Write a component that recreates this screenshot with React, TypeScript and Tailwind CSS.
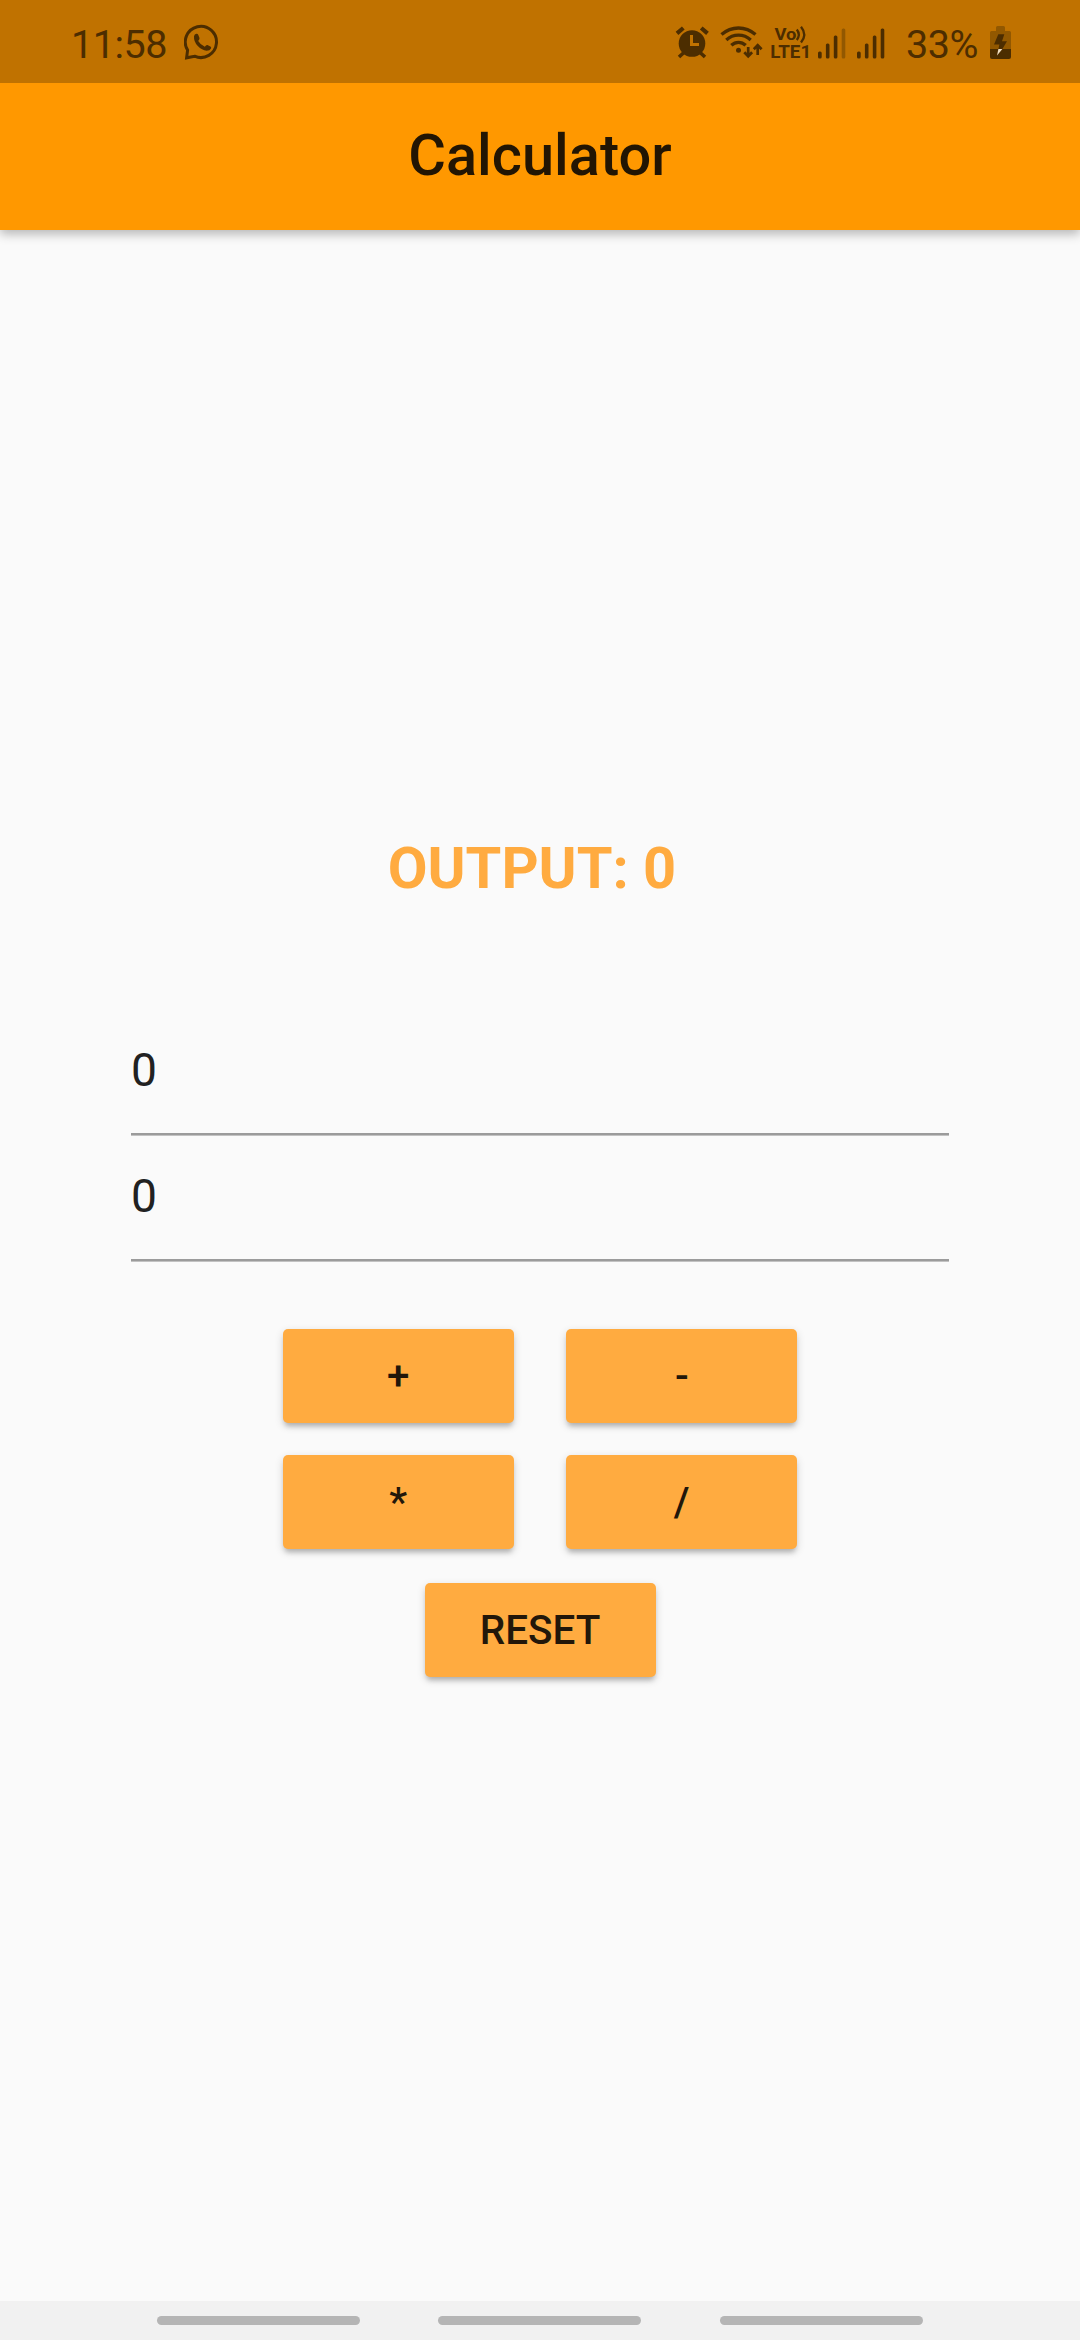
import { useState } from "react";

function WhatsAppIcon() {
  return (
    <svg className="ml-[18px] mt-[24px] h-[36px] w-[36px] shrink-0" viewBox="184 24 36 36" fill="none">
      <path d="M187.6 50.1A15.6 15.6 0 1 1 194.6 56.2L186.6 57.8Z" stroke="#4c2d00" strokeWidth="3" strokeLinejoin="miter" />
      <path d="M194 36.2q.4-2 2.4-2.4 1.3-.2 1.8 1l1.3 3.1q.4 1-1.3 3 2.4 4 6.600 5.800 1.600-2.200 2.600-1.700l3 1.400q1.200.6.6 2.200-1 2.200-4.400 2.200-4.600-.4-8.800-4.700-4.200-4.700-3.800-9.900Z" fill="#4c2d00" />
    </svg>
  );
}

function AlarmIcon() {
  return (
    <svg className="mt-[26px] h-[34px] w-[34px] shrink-0" viewBox="675 26 34 34" fill="none">
      <circle cx="692" cy="43.500" r="13.300" fill="#4c2d00" />
      <path d="M677 33.300l6.300-5.300M707.500 33.300l-6.300-5.300" stroke="#4c2d00" strokeWidth="4.200" />
      <path d="M684.500 52l-5.500 5M699.500 52l5.500 5" stroke="#4c2d00" strokeWidth="3.600" />
      <path d="M691.500 35v9.400h7.500" stroke="#c07200" strokeWidth="3" />
    </svg>
  );
}

function WifiIcon() {
  return (
    <svg className="ml-[11px] mt-[24px] h-[36px] w-[44px] shrink-0" viewBox="720 24 44 36" fill="none" stroke="#4c2d00">
      <path d="M721.500 34.600Q729 28 738.500 28T755.500 34.600" strokeWidth="3.300" />
      <path d="M726.300 40Q731.500 35.200 738.500 35.200T750.700 40" strokeWidth="3.300" />
      <path d="M731.300 45.300Q734.500 42.300 738.500 42.300T745.700 45.300" strokeWidth="3.300" />
      <circle cx="738.500" cy="50.200" r="2.500" fill="#4c2d00" stroke="none" />
      <path d="M748.200 47v9M744.300 52.300l3.900 4 3.900-4M757.700 55v-9M753.800 49.200l3.900-4 3.900 4" strokeWidth="2.700" />
    </svg>
  );
}

function VolteIcon() {
  return (
    <svg className="ml-[6px] mt-[24px] h-[38px] w-[42px] shrink-0" viewBox="770 24 42 38" fontFamily="Roboto" fontWeight="700" fill="#4c2d00">
      <text x="774.500" y="40" fontSize="17" textLength="22" lengthAdjust="spacingAndGlyphs">Vo</text>
      <path d="M796.800 29.500q4 5 0 10.500M801 26.800q6.500 8 0 15.800" fill="none" stroke="#4c2d00" strokeWidth="2.300" />
      <text x="770.200" y="58" fontSize="18.500" textLength="41" lengthAdjust="spacingAndGlyphs">LTE1</text>
    </svg>
  );
}

function SignalIcon({ full }: { full: boolean }) {
  return (
    <svg className="mt-[28px] h-[31px] w-[28px] shrink-0" viewBox="0 0 28 31" fill="#4c2d00">
      <rect x="0" y="23.500" width="3.700" height="7" rx="1.500" />
      <rect x="7.900" y="15.500" width="3.600" height="15" rx="1.500" />
      <rect x="15.800" y="7.500" width="3.600" height="23" rx="1.500" />
      <rect x="23.700" y="0.500" width="3.600" height="30" rx="1.500" fill={full ? "#4c2d00" : "#925800"} />
    </svg>
  );
}

function BatteryIcon() {
  return (
    <svg className="mt-[25px] h-[35px] w-[22px] shrink-0" viewBox="990 25 22 35" fill="#925800">
      <path d="M996 31v-3.500q0-1.500 1.500-1.500h6q1.500 0 1.500 1.500V31h4.500q1.500 0 1.500 1.500V49h-21V32.500q0-1.500 1.500-1.500Z" />
      <path d="M990 49h21v8q0 2-2 2h-17q-2 0-2-2Z" fill="#4c2d00" />
      <path d="M998.300 34.300h6l-2.300 7h5L1002.400 49h-4l1-4.500h-5.400Z" fill="#4c2d00" />
      <path d="M998.400 49h4l-5.400 6.500Z" fill="#f1dfc4" />
    </svg>
  );
}

function OperationButton({ label, onClick }: { label: string; onClick: () => void }) {
  return (
    <button
      onClick={onClick}
      className="flex h-[94.5px] w-[231px] items-center justify-center rounded-[5px] bg-[#ffab40] pt-[2px] text-[40.4px] leading-[48px] font-medium text-[#22170a] shadow-[0_5px_5px_-2px_rgba(0,0,0,0.2),0_3px_8px_rgba(0,0,0,0.16)]"
    >
      {label}
    </button>
  );
}

export default function App() {
  const [first, setFirst] = useState("0");
  const [second, setSecond] = useState("0");
  const [output, setOutput] = useState("0");
  const a = Number(first);
  const b = Number(second);
  const field =
    "block h-[126px] w-full border-b-2 border-[#9b9b9b] bg-transparent pb-[3px] text-[46.2px] text-[#212121] shadow-[0_1px_0_#c2c2c2] outline-none";

  return (
    <div className="flex h-[2340px] w-[1080px] flex-col overflow-hidden bg-[#fafafa] font-['Roboto',sans-serif]">
      <header className="z-10 shrink-0 bg-[#ff9800] shadow-[0_4px_10px_rgba(0,0,0,0.28)]">
        <div className="flex h-[83px] items-start justify-between bg-[#c07200] pr-[68px] pl-[71px] text-[39.500px] leading-[46px] text-[#4c2d00]">
          <div className="flex">
            <span className="mt-[22px] w-[95px] tracking-[-0.5px] whitespace-nowrap">11:58</span>
            <WhatsAppIcon />
          </div>
          <div className="flex">
            <AlarmIcon />
            <WifiIcon />
            <VolteIcon />
            <div className="ml-[6px] flex gap-[11px]">
              <SignalIcon full={false} />
              <SignalIcon full />
            </div>
            <span className="mt-[22px] ml-[21px] w-[84px] tracking-[-0.5px] whitespace-nowrap">33%</span>
            <BatteryIcon />
          </div>
        </div>
        <h1 className="flex h-[147px] items-center justify-center pb-[2px] text-[57.750px] font-medium text-[#221503]">
          Calculator
        </h1>
      </header>

      <main className="flex flex-1 flex-col items-center">
        <p className="mt-[604px] mr-[16px] text-[57.750px] leading-[68px] font-bold whitespace-pre text-[#ffab40]">OUTPUT: {output}</p>
        <div className="mt-[107px] w-[818px]">
          <input className={field} value={first} onChange={(e) => setFirst(e.target.value)} />
          <input className={field} value={second} onChange={(e) => setSecond(e.target.value)} />
        </div>
        <div className="mt-[67.500px] grid grid-cols-2 gap-x-[52.500px] gap-y-[31.500px]">
          <OperationButton label="+" onClick={() => setOutput(String(a + b))} />
          <OperationButton label="-" onClick={() => setOutput(String(a - b))} />
          <OperationButton label="*" onClick={() => setOutput(String(a * b))} />
          <OperationButton label="/" onClick={() => setOutput(String(a / b))} />
        </div>
        <div className="mt-[33.500px]">
          <OperationButton
            label="RESET"
            onClick={() => {
              setFirst("0");
              setSecond("0");
              setOutput("0");
            }}
          />
        </div>
      </main>

      <nav className="flex h-[39px] shrink-0 gap-[78px] bg-[#f1f1f1] pt-[15px] pl-[157px]">
        <span className="h-[9px] w-[203px] rounded-full bg-[#b5b5b5]" />
        <span className="h-[9px] w-[203px] rounded-full bg-[#b5b5b5]" />
        <span className="ml-px h-[9px] w-[203px] rounded-full bg-[#b5b5b5]" />
      </nav>
    </div>
  );
}
